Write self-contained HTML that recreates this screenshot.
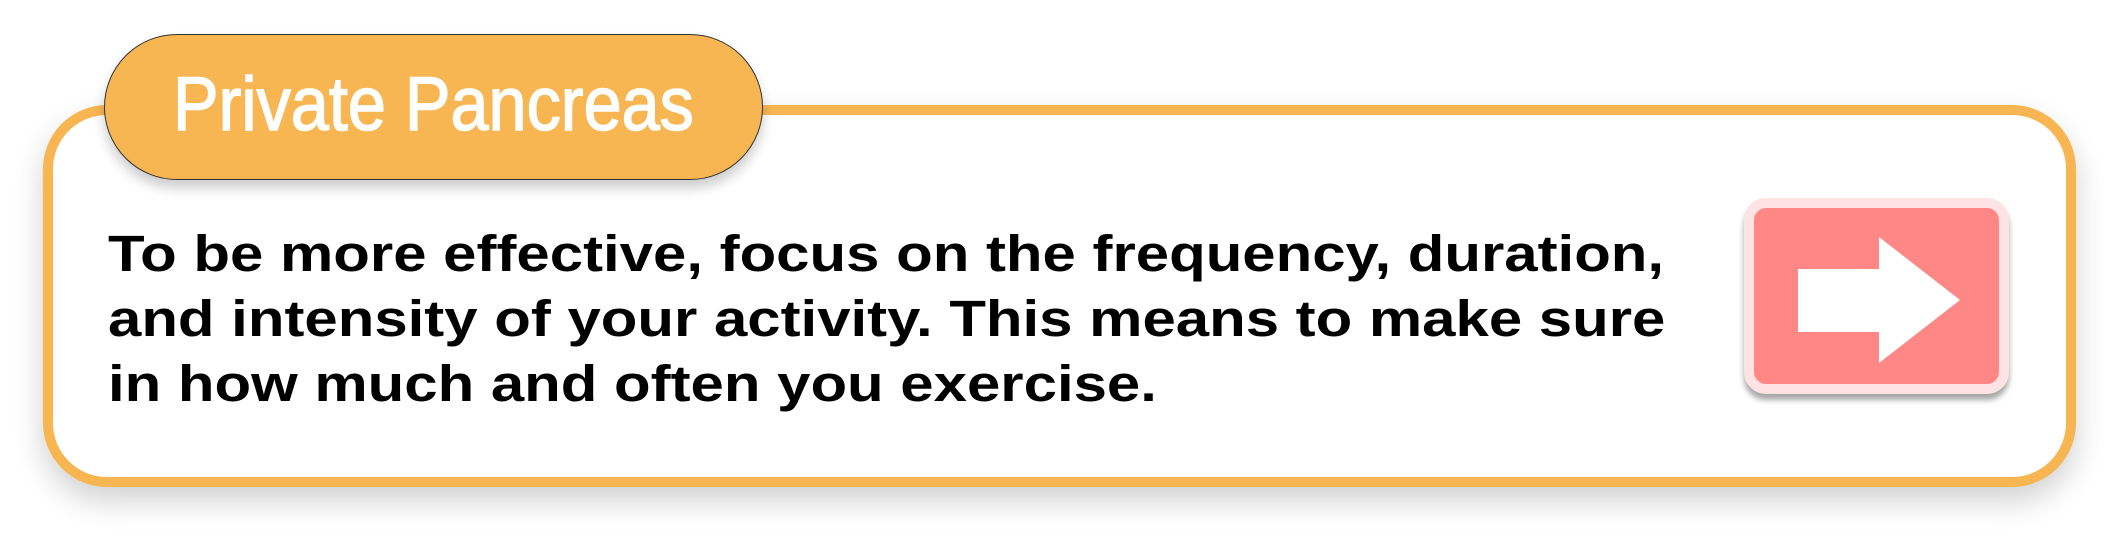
<!DOCTYPE html>
<html><head><style>
html,body{margin:0;padding:0;background:#fff;}
body{width:2119px;height:539px;position:relative;overflow:hidden;font-family:"Liberation Sans",sans-serif;}
.box{position:absolute;left:43px;top:105px;width:2013px;height:362px;border:10px solid #f8b652;border-radius:64px;background:#fff;box-shadow:0 14px 30px rgba(0,0,0,0.18);}
.pill{position:absolute;left:104px;top:34px;width:657px;height:144px;border:1.5px solid #333;border-radius:73px;background:#f8b652;box-shadow:0 8px 12px rgba(0,0,0,0.2);}
.pill span{position:absolute;left:68px;top:30px;font-size:76px;color:#fff;white-space:nowrap;transform:scaleX(0.9);transform-origin:left top;line-height:80px;-webkit-text-stroke:1.5px #fff;}
.txt{position:absolute;left:108px;font-weight:bold;font-size:51px;color:#000;white-space:nowrap;line-height:60px;transform:scaleX(1.175);transform-origin:left top;}
.btn{position:absolute;left:1744px;top:198px;width:245px;height:176px;border:10px solid #fde3e3;border-radius:22px;background:#ff8887;box-shadow:0 6px 6px rgba(0,0,0,0.35);}
</style></head><body>
<div class="box"></div>
<div class="pill"><span>Private Pancreas</span></div>
<div class="txt" style="top:224px">To be more effective, focus on the frequency, duration,</div>
<div class="txt" style="top:289px">and intensity of your activity. This means to make sure</div>
<div class="txt" style="top:354px">in how much and often you exercise.</div>
<div class="btn"></div>
<svg style="position:absolute;left:0;top:0" width="2119" height="539"><polygon points="1798,269 1879,269 1879,237 1960,300 1879,363 1879,332 1798,332" fill="#fff"/></svg>
</body></html>
